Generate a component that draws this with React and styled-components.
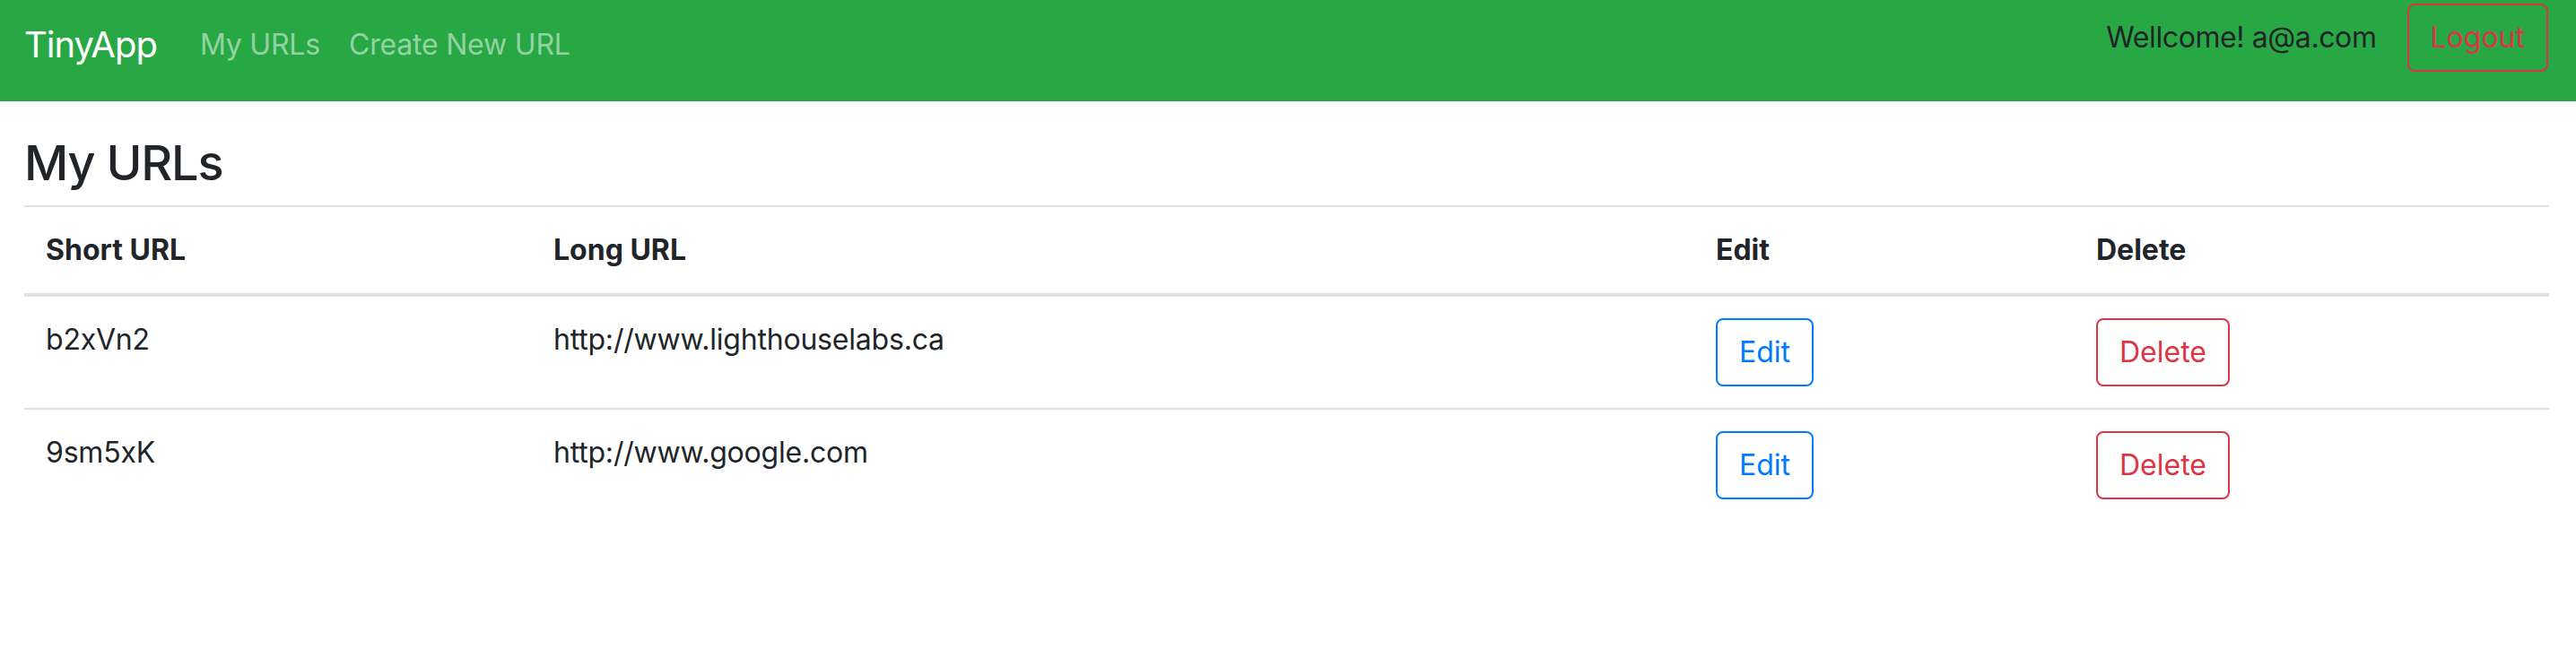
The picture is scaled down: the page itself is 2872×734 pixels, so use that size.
import React from 'react';
import styled, { createGlobalStyle } from 'styled-components';

const GlobalStyle = createGlobalStyle`
  html,
  body {
    margin: 0;
    padding: 0;
    background: #fff;
  }

  body {
    font-family: Inter, 'Noto Sans', 'Liberation Sans', sans-serif;
    color: #212529;
  }

  * {
    box-sizing: border-box;
  }
`;

const Navbar = styled.nav`
  display: flex;
  align-items: flex-start;
  height: 113px;
  padding: 4px 31px 0 27px;
  background: #28a745;
`;

const NavLeft = styled.div`
  display: flex;
  align-items: center;
  height: 80px;
  margin-top: 6px;
`;

const Brand = styled.a`
  margin-right: 32px;
  color: #fff;
  font-size: 40px;
  line-height: 60px;
  letter-spacing: -1px;
  text-decoration: none;
`;

const NavLink = styled.a`
  padding: 0 16px;
  color: rgba(255, 255, 255, 0.5);
  font-size: 32px;
  line-height: 48px;
  letter-spacing: -0.2px;
  text-decoration: none;
`;

const NavRight = styled.div`
  display: flex;
  align-items: center;
  gap: 34px;
  margin-left: auto;
  height: 76px;
`;

const Welcome = styled.span`
  color: #212529;
  font-size: 32px;
  line-height: 48px;
  letter-spacing: -0.4px;
`;

const OutlineButton = styled.button`
  display: inline-block;
  vertical-align: top;
  padding: 12px 24px;
  border: 2px solid ${({ $tone }) => $tone};
  border-radius: 8px;
  background: transparent;
  color: ${({ $tone }) => $tone};
  font-family: inherit;
  font-size: 32px;
  line-height: 48px;
  cursor: pointer;
`;

const Main = styled.main`
  padding: 0 30px 0 27px;
`;

const Heading = styled.h3`
  margin: 37px 0 14px;
  font-size: 54px;
  font-weight: 500;
  line-height: 1.2;
  letter-spacing: -1.2px;
`;

const Table = styled.table`
  width: 100%;
  table-layout: fixed;
  border-collapse: collapse;
  color: #212529;
`;

const Th = styled.th`
  width: ${({ $w }) => ($w ? `${$w}px` : 'auto')};
  padding: 24px;
  border-top: 2px solid #dee2e6;
  border-bottom: 4px solid #dee2e6;
  font-size: 32px;
  font-weight: 700;
  line-height: 48px;
  text-align: left;
  vertical-align: bottom;
`;

const Td = styled.td`
  padding: 24px;
  border-top: 2px solid #dee2e6;
  font-size: 32px;
  line-height: 48px;
  letter-spacing: -0.2px;
  vertical-align: top;
`;

const urls = [
  { short: 'b2xVn2', long: 'http://www.lighthouselabs.ca' },
  { short: '9sm5xK', long: 'http://www.google.com' },
];

const App = () => (
  <>
    <GlobalStyle />
    <Navbar>
      <NavLeft>
        <Brand href="#">TinyApp</Brand>
        <NavLink href="#">My URLs</NavLink>
        <NavLink href="#">Create New URL</NavLink>
      </NavLeft>
      <NavRight>
        <Welcome>Wellcome! a@a.com</Welcome>
        <OutlineButton $tone="#dc3545">Logout</OutlineButton>
      </NavRight>
    </Navbar>

    <Main>
      <Heading>My URLs</Heading>
      <Table>
        <thead>
          <tr>
            <Th $w={566}>Short URL</Th>
            <Th $w={1296}>Long URL</Th>
            <Th $w={424}>Edit</Th>
            <Th>Delete</Th>
          </tr>
        </thead>
        <tbody>
          {urls.map(url => (
            <tr key={url.short}>
              <Td>{url.short}</Td>
              <Td>{url.long}</Td>
              <Td>
                <OutlineButton $tone="#007bff">Edit</OutlineButton>
              </Td>
              <Td>
                <OutlineButton $tone="#dc3545">Delete</OutlineButton>
              </Td>
            </tr>
          ))}
        </tbody>
      </Table>
    </Main>
  </>
);

export default App;
